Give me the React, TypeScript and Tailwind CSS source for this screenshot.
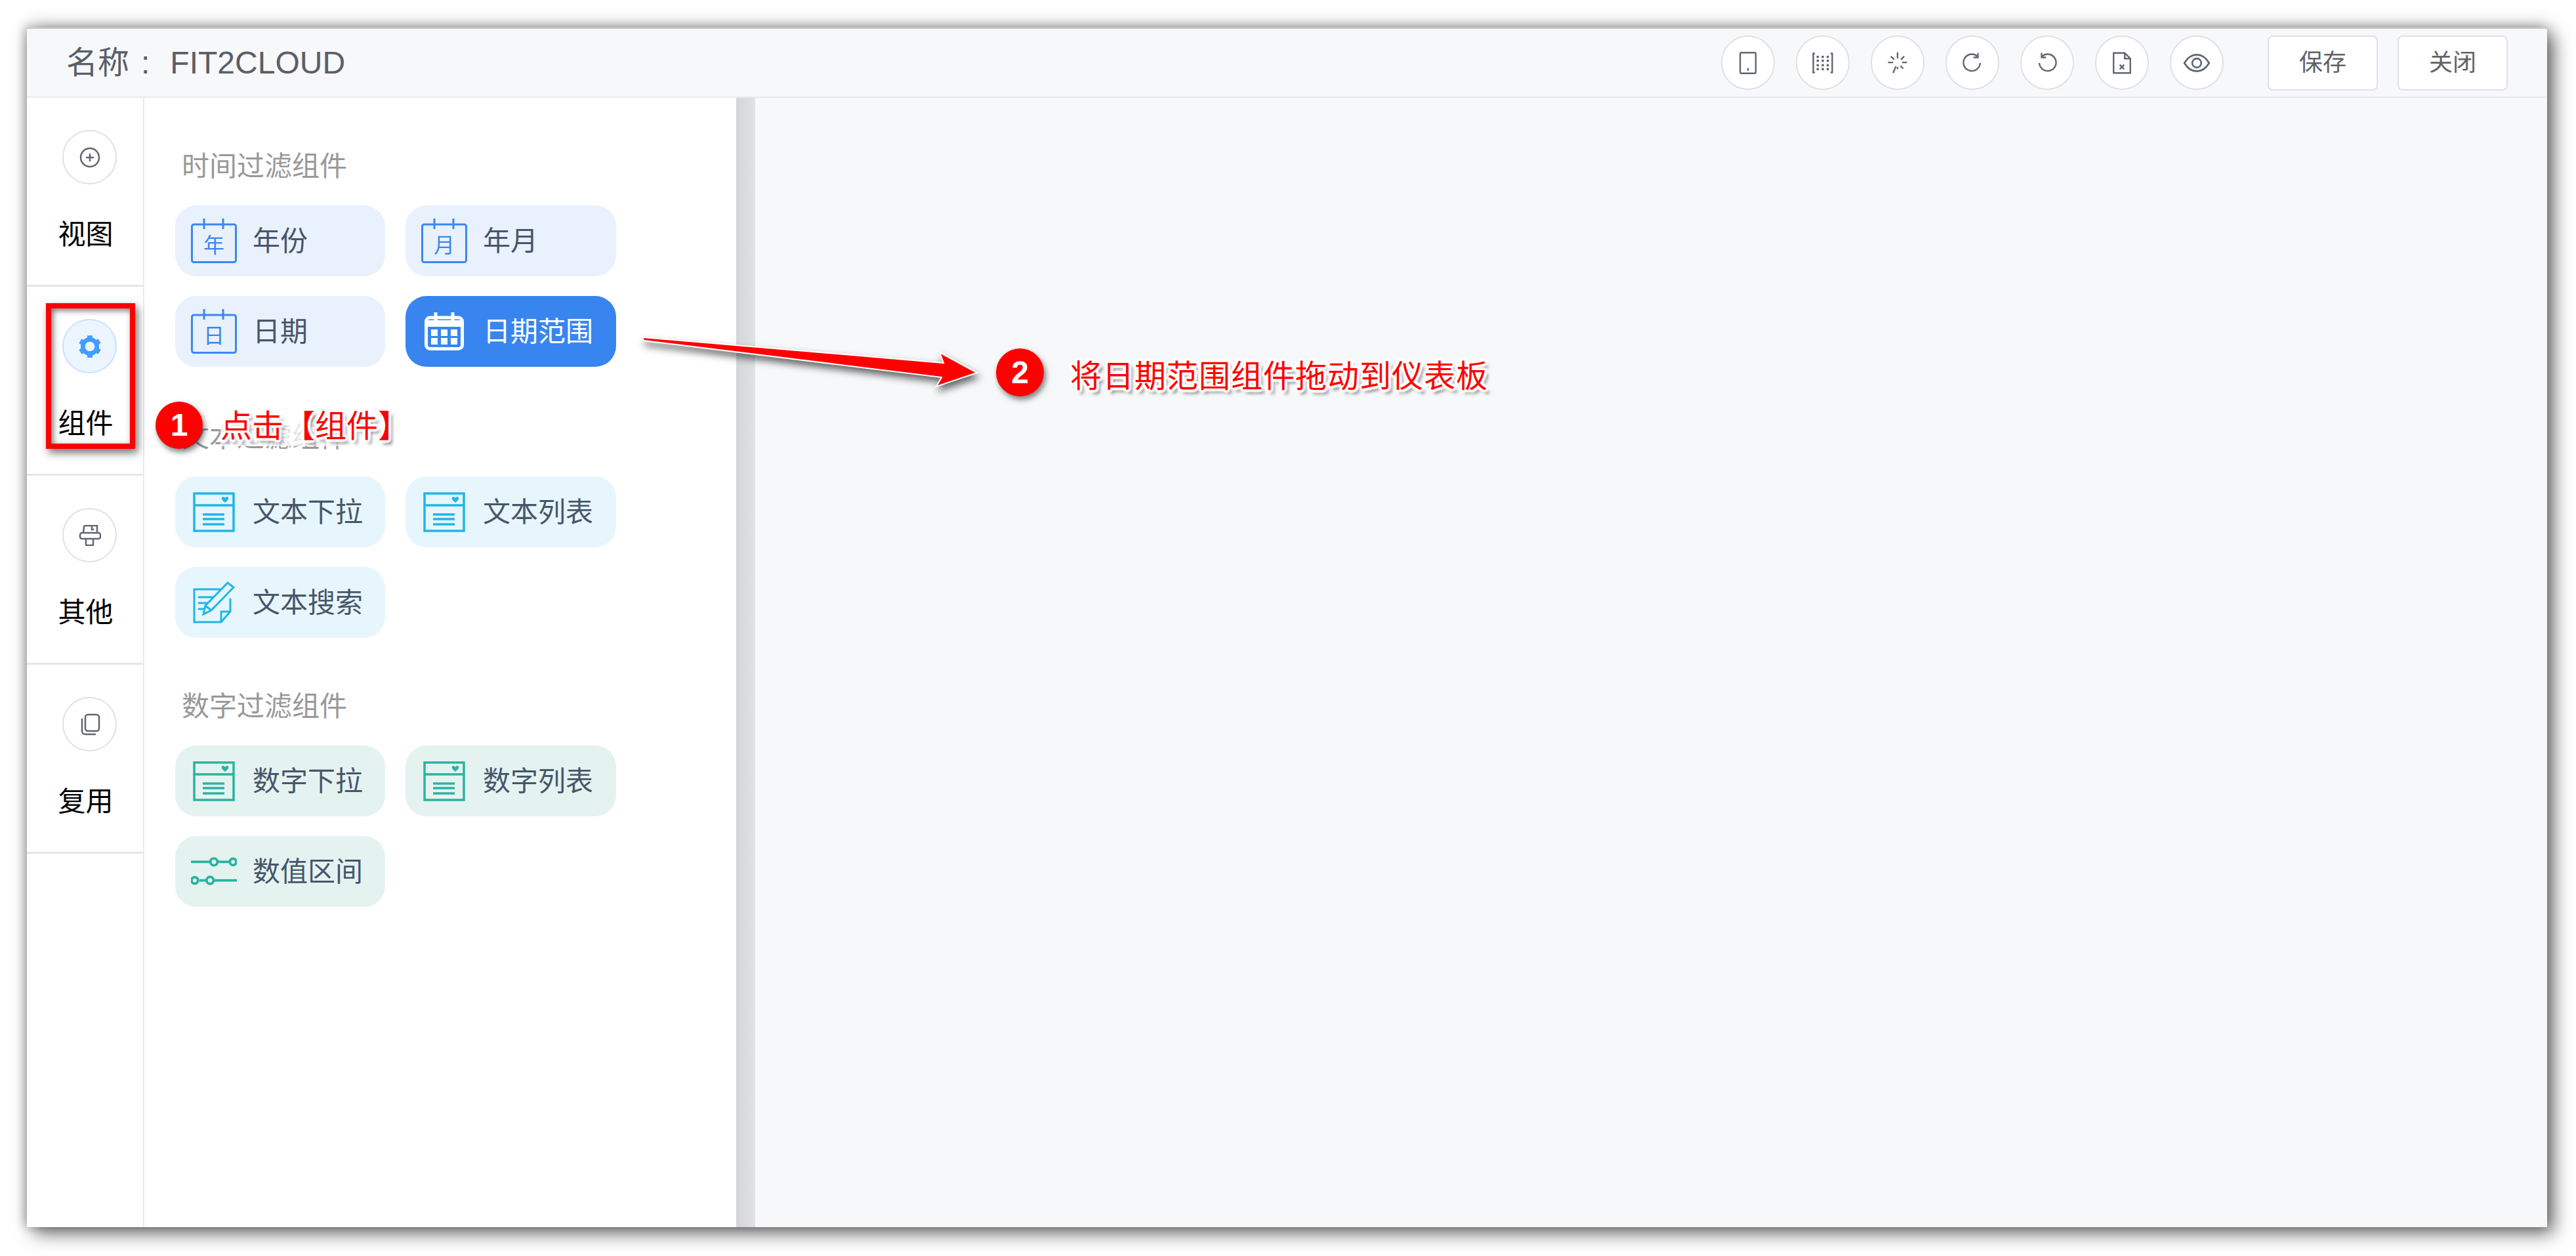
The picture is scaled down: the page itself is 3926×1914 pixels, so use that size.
const cjk = "font-['Liberation_Sans','Noto_Sans_CJK_SC',sans-serif]";

function CalendarIcon({ label, color = "#3c87ee" }: { label: string; color?: string }) {
  return (
    <svg width="70" height="68" viewBox="0 0 70 68" fill="none" stroke={color} strokeWidth="3">
      <rect x="1.500" y="9" width="67" height="57.500" rx="3" />
      <path d="M20 0v16M49 0v16" />
      <text x="35" y="52" textAnchor="middle" fontSize="32" fill={color} stroke="none" fontFamily="Noto Sans CJK SC, sans-serif">
        {label}
      </text>
    </svg>
  );
}

function RangeIcon() {
  return (
    <svg width="60" height="58" viewBox="0 0 60 58" fill="none">
      <rect x="2.500" y="8" width="55" height="47.500" rx="6" stroke="#fff" strokeWidth="5" />
      <path d="M17 0v14M43 0v14" stroke="#fff" strokeWidth="5" />
      <path d="M4 12h52v10H4z" fill="#fff" />
      {[10, 25, 40].map((x) =>
        [26, 39].map((y) => <rect key={`${x}-${y}`} x={x} y={y} width="10" height="10" fill="#fff" />)
      )}
    </svg>
  );
}

function ListIcon({ color }: { color: string }) {
  return (
    <svg width="64" height="61" viewBox="0 0 64 61" fill="none" stroke={color} strokeWidth="3.500">
      <rect x="2" y="2" width="60" height="57" />
      <path d="M2 20h60" />
      <path d="M44 8c2-2 4-1 5 1 1-2 3-3 5-1 1 2 0 4-5 8-5-4-6-6-5-8z" fill={color} stroke="none" />
      <path d="M15 34h33M15 41h33M15 49h33" />
    </svg>
  );
}

function EditIcon({ color }: { color: string }) {
  return (
    <svg width="64" height="64" viewBox="0 0 64 64" fill="none" stroke={color} strokeWidth="3">
      <path d="M42 12H2v50h41l14-16V26" />
      <path d="M43 62V46h14" />
      <path d="M8 24h26M8 33h20M8 42h12" />
      <path d="M16 50l3-13L53 2l9 7-34 35z" fill="#e7f6fc" />
      <path d="M19 37l9 7" />
    </svg>
  );
}

function SliderIcon({ color }: { color: string }) {
  return (
    <svg width="72" height="44" viewBox="0 0 72 44" fill="none" stroke={color} strokeWidth="4">
      <path d="M0 7h30M43 7h18M13 36H24M37 36h35" />
      <circle cx="36" cy="7" r="5.500" />
      <circle cx="66" cy="7" r="5" />
      <circle cx="6" cy="36" r="5" />
      <circle cx="30" cy="36" r="5.500" />
    </svg>
  );
}

function GearIcon() {
  return (
    <svg width="36" height="36" viewBox="0 0 32 32" fill="none" stroke="#409eff">
      <circle cx="16" cy="16" r="9.500" strokeWidth="6" />
      <path d="M16 1v5M16 26v5M3 8.500l4 2.500M25 21l4 2.500M3 23.500L7 21M25 11l4-2.500" strokeWidth="7" />
    </svg>
  );
}

function SideIcon({ name }: { name: string }) {
  const c = "#5f6672";
  if (name === "add")
    return (
      <svg width="32" height="32" viewBox="0 0 32 32" fill="none" stroke={c} strokeWidth="2.500">
        <circle cx="16" cy="16" r="14" />
        <path d="M16 10v12M10 16h12" />
      </svg>
    );
  if (name === "other")
    return (
      <svg width="34" height="32" viewBox="0 0 34 32" fill="none" stroke={c} strokeWidth="2.500">
        <path d="M7 12l1-9a2 2 0 0 1 2-2h18v11" />
        <path d="M20 1v6h3" />
        <path d="M5 12h25a3 3 0 0 1 3 3v3a3 3 0 0 1-3 3H5a3 3 0 0 1-3-3v-3a3 3 0 0 1 3-3z" />
        <path d="M11 21v9a1 1 0 0 0 1 1h9a1 1 0 0 0 1-1v-9" />
      </svg>
    );
  return (
    <svg width="32" height="34" viewBox="0 0 32 34" fill="none" stroke={c} strokeWidth="2.500">
      <rect x="9" y="2" width="21" height="25" rx="4" />
      <path d="M4 8v19a5 5 0 0 0 5 5h16" />
    </svg>
  );
}

function ToolIcon({ name }: { name: string }) {
  const c = "#5f6672";
  const props = { width: 34, height: 34, viewBox: "0 0 40 40", fill: "none", stroke: c, strokeWidth: 2.8 };
  switch (name) {
    case "phone":
      return (
        <svg {...props}>
          <rect x="6" y="1.500" width="28" height="37" rx="2" />
          <path d="M20 29v5" />
        </svg>
      );
    case "grid":
      return (
        <svg {...props}>
          <path d="M6 3H3v34h3M34 3h3v34h-3" />
          {[11, 20, 29].map((x) =>
            [9, 16, 24, 31].map((y) => <rect key={`${x}-${y}`} x={x - 2} y={y - 2} width="4" height="4" fill={c} stroke="none" />)
          )}
        </svg>
      );
    case "spark":
      return (
        <svg {...props}>
          <path d="M20 1v11M20 27v4M3 19h9M28 19h9M8 8l6 6M32 8l-6 6M12 38l5-12M30 30l-5-5" />
        </svg>
      );
    case "redo":
      return (
        <svg {...props}>
          <path d="M29 8A15 15 0 1 0 34 20" />
          <path d="M30 2v8h-8" />
        </svg>
      );
    case "undo":
      return (
        <svg {...props}>
          <path d="M11 8A15 15 0 1 1 6 20" />
          <path d="M10 2v8h8" />
        </svg>
      );
    case "file":
      return (
        <svg {...props}>
          <path d="M5 2h20l10 10v26H5z" />
          <path d="M25 2v10h10M16 23l8 8M24 23l-8 8" />
        </svg>
      );
    default:
      return (
        <svg width="42" height="42" viewBox="0 0 40 40" fill="none" stroke={c} strokeWidth="2.500">
          <path d="M2 20C8 10 14 8 20 8s12 2 18 12c-6 10-12 12-18 12S8 30 2 20z" />
          <circle cx="20" cy="20" r="6.500" />
        </svg>
      );
  }
}

type Tone = "blue" | "cyan" | "teal";

const toneBg: Record<Tone, string> = {
  blue: "bg-[#e9f1fd]",
  cyan: "bg-[#e7f6fc]",
  teal: "bg-[#e5f3f0]",
};

function Chip({ label, icon, tone, active }: { label: string; icon: React.ReactNode; tone: Tone; active?: boolean }) {
  return (
    <div
      className={`flex h-[108px] w-full items-center gap-[24px] rounded-[32px] pl-[24px] ${
        active ? "bg-[#3885f0] text-white" : `${toneBg[tone]} text-[#47566b]`
      }`}
    >
      <div className="flex w-[70px] shrink-0 justify-center">{icon}</div>
      <span className="pt-[2px] text-[42px] leading-none">{label}</span>
    </div>
  );
}

function Section({ title, children, className }: { title: string; children: React.ReactNode; className?: string }) {
  return (
    <section className={className}>
      <h3 className="mb-[29px] ml-[10px] text-[42px] leading-[60px] font-normal text-[#999]">{title}</h3>
      <div className="grid w-[672px] grid-cols-[320px_321px] gap-x-[31px] gap-y-[30px]">{children}</div>
    </section>
  );
}

const sideItems = [
  { label: "视图", icon: <SideIcon name="add" /> },
  { label: "组件", icon: <GearIcon />, active: true },
  { label: "其他", icon: <SideIcon name="other" /> },
  { label: "复用", icon: <SideIcon name="copy" /> },
];

const tools = ["phone", "grid", "spark", "redo", "undo", "file", "eye"];

const cyan = "#1fb6e6";
const teal = "#2bb3a0";

export default function App() {
  return (
    <div className={`${cjk} relative h-[1914px] w-[3926px] overflow-hidden bg-white pt-[42px] pr-[44px] pb-[44px] pl-[41px]`}>
      <div className="flex h-full flex-col bg-[#f7f8fa] shadow-[10px_10px_26px_rgba(0,0,0,0.55),0_-6px_22px_rgba(0,0,0,0.18),-4px_0_14px_rgba(0,0,0,0.18)]">
        <header className="flex h-[107px] shrink-0 items-center border-t-2 border-b-2 border-t-[#c9cbce] border-b-[#e8eaed] pr-[60px] pl-[60px]">
          <div className="text-[48px] leading-none text-[#5a5f68]">
            名称<span className="mr-[31px] ml-[18px]">:</span>FIT2CLOUD
          </div>
          <div className="ml-auto flex items-center gap-[32px]">
            {tools.map((t) => (
              <div key={t} className="flex h-[83px] w-[82px] items-center justify-center rounded-full border-2 border-[#dfe1e8] bg-white">
                <ToolIcon name={t} />
              </div>
            ))}
          </div>
          <div className="ml-[67px] flex gap-[30px]">
            <button className="h-[84px] w-[168px] rounded-[8px] border-2 border-[#dfe1e8] bg-white text-[36px] text-[#606266]">保存</button>
            <button className="h-[84px] w-[168px] rounded-[8px] border-2 border-[#dfe1e8] bg-white text-[36px] text-[#606266]">关闭</button>
          </div>
        </header>

        <div className="flex min-h-0 flex-1">
          <aside className="w-[179px] shrink-0 border-r-2 border-[#e8eaed] bg-white">
            {sideItems.map((item) => (
              <div key={item.label} className="flex h-[288px] flex-col items-center border-b-[3px] border-[#e5e6e8] pt-[49px]">
                <div
                  className={`ml-[14px] flex h-[83px] w-[83px] items-center justify-center rounded-full border-2 ${
                    item.active ? "border-[#c6e2ff] bg-[#ecf5ff]" : "border-[#dfe1e8] bg-white"
                  }`}
                >
                  {item.icon}
                </div>
                <div className="mt-[49px] ml-[2px] text-[42px] leading-[56px] text-black">{item.label}</div>
              </div>
            ))}
          </aside>

          <div className="w-[902px] shrink-0 bg-white pt-[75px] pl-[47px]">
            <Section title="时间过滤组件">
              <Chip label="年份" tone="blue" icon={<CalendarIcon label="年" />} />
              <Chip label="年月" tone="blue" icon={<CalendarIcon label="月" />} />
              <Chip label="日期" tone="blue" icon={<CalendarIcon label="日" />} />
              <Chip label="日期范围" tone="blue" active icon={<RangeIcon />} />
            </Section>
            <Section title="文本过滤组件" className="mt-[78px]">
              <Chip label="文本下拉" tone="cyan" icon={<ListIcon color={cyan} />} />
              <Chip label="文本列表" tone="cyan" icon={<ListIcon color={cyan} />} />
              <Chip label="文本搜索" tone="cyan" icon={<EditIcon color={cyan} />} />
            </Section>
            <Section title="数字过滤组件" className="mt-[75px]">
              <Chip label="数字下拉" tone="teal" icon={<ListIcon color={teal} />} />
              <Chip label="数字列表" tone="teal" icon={<ListIcon color={teal} />} />
              <Chip label="数值区间" tone="teal" icon={<SliderIcon color={teal} />} />
            </Section>
          </div>

          <div className="w-[29px] shrink-0 bg-gradient-to-r from-[#d3d5d9] to-[#e1e2e6]" />
          <main className="flex-1" />
        </div>
      </div>

      {/* annotations pasted over the screenshot */}
      <div className="absolute top-[462px] left-[70px] h-[222px] w-[136px] border-[8px] border-[#ff0000] shadow-[4px_6px_12px_rgba(0,0,0,0.55),inset_3px_3px_10px_rgba(0,0,0,0.55)]" />

      <div className="absolute top-[612px] left-[237px] flex h-[72px] w-[72px] items-center justify-center rounded-full bg-[#ff0000] text-[48px] font-bold text-white shadow-[3px_5px_8px_rgba(0,0,0,0.5)]">
        1
      </div>
      <div className="absolute top-[620px] left-[336px] bg-white/75 text-[48px] leading-[60px] whitespace-nowrap text-[#ff0000] [text-shadow:-4px_0_2px_#fff,4px_0_2px_#fff,0_-4px_2px_#fff,0_4px_2px_#fff,-3px_-3px_2px_#fff,3px_3px_2px_#fff,3px_-3px_2px_#fff,-3px_3px_2px_#fff,5px_6px_5px_rgba(0,0,0,0.55)]">
        点击【组件】
      </div>

      <svg className="absolute top-[505px] left-[970px] drop-shadow-[3px_7px_6px_rgba(0,0,0,0.6)]" width="530" height="95" viewBox="970 505 530 95">
        <polygon points="979,514 1438,553 1432,537 1489,568 1427,589 1435,575 981,519" fill="#ff0000" stroke="#fff" strokeWidth="2" />
      </svg>

      <div className="absolute top-[531px] left-[1518px] flex h-[73px] w-[73px] items-center justify-center rounded-full bg-[#ff0000] text-[48px] font-bold text-white shadow-[3px_5px_8px_rgba(0,0,0,0.5)]">
        2
      </div>
      <div className="absolute top-[544px] left-[1631px] text-[48px] leading-[60px] tracking-[1px] whitespace-nowrap text-[#ff0000] [text-shadow:-4px_0_2px_#fff,4px_0_2px_#fff,0_-4px_2px_#fff,0_4px_2px_#fff,-3px_-3px_2px_#fff,3px_3px_2px_#fff,3px_-3px_2px_#fff,-3px_3px_2px_#fff,5px_6px_5px_rgba(0,0,0,0.55)]">
        将日期范围组件拖动到仪表板
      </div>
    </div>
  );
}
